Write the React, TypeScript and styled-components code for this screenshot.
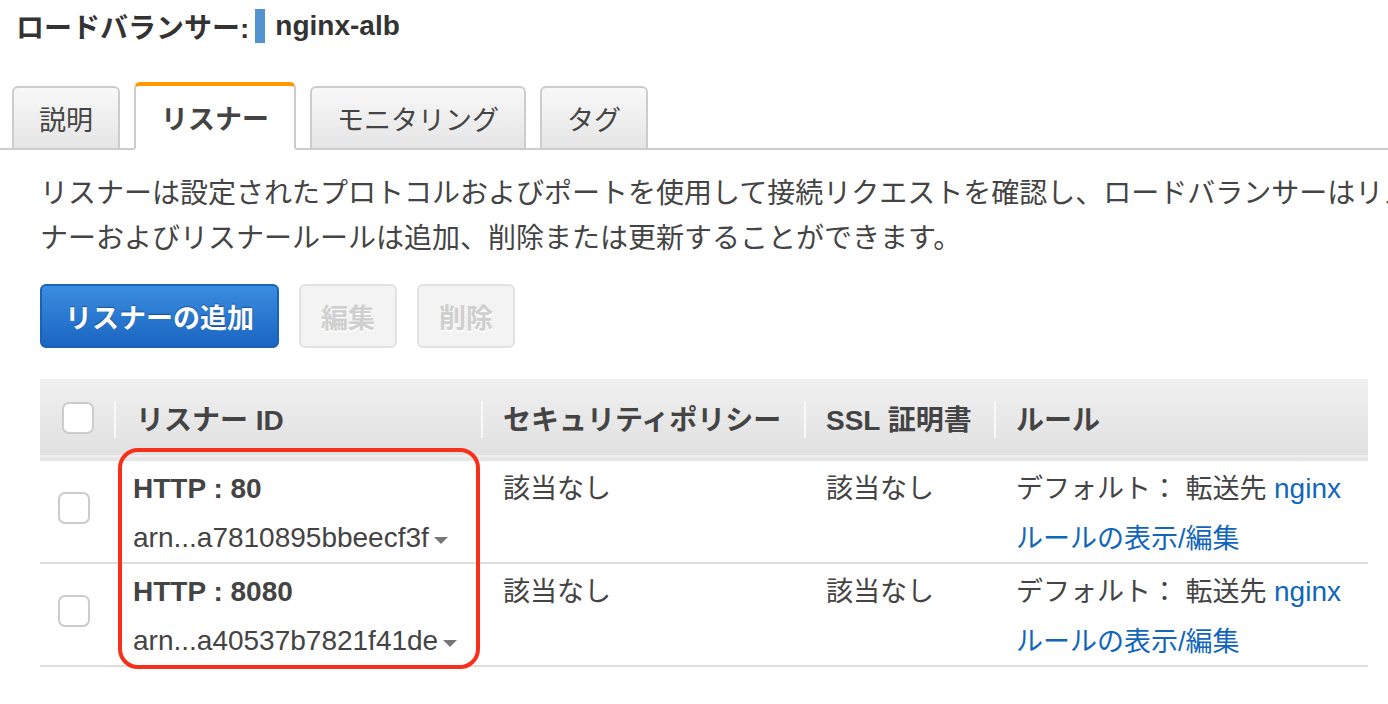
import styled, { createGlobalStyle } from "styled-components";

const GlobalStyle = createGlobalStyle`
	html, body {
		margin: 0;
		padding: 0;
		background: #ffffff;
		overflow: hidden;
	}
	body {
		width: 1388px;
		font-family: "Liberation Sans", "Noto Sans CJK JP", sans-serif;
		color: #444444;
	}
`

const Page = styled.div`
	width: 1388px;
	height: 704px;
	overflow: hidden;
`

const Title = styled.h1`
	margin: 0;
	padding: 0 16px;
	height: 52px;
	display: flex;
	align-items: center;
	font-size: 28px;
	font-weight: 700;
	color: #333333;
`

const TitleMark = styled.span`
	display: inline-block;
	width: 10px;
	height: 34px;
	background: #5294cf;
	margin: 0 10px 0 6px;
`

const TabBar = styled.div`
	margin-top: 30px;
	display: flex;
	align-items: flex-end;
	gap: 14px;
	padding-left: 12px;
	border-bottom: 2px solid #cccccc;
	height: 66px;
`

const Tab = styled.div<{ $active?: boolean }>`
	box-sizing: border-box;
	height: ${(p) => (p.$active ? "68px" : "64px")};
	margin-bottom: -2px;
	padding: 0 25px;
	display: flex;
	align-items: center;
	font-size: 27px;
	font-weight: ${(p) => (p.$active ? 700 : 400)};
	color: #444444;
	border: 2px solid #cccccc;
	border-top: ${(p) => (p.$active ? "4px solid #ff9900" : "2px solid #cccccc")};
	border-bottom: ${(p) => (p.$active ? "2px solid #ffffff" : "2px solid #cccccc")};
	border-radius: 6px 6px 0 0;
	background: ${(p) => (p.$active ? "#ffffff" : "linear-gradient(#f8f8f8, #e5e5e5)")};
`

const Content = styled.div`
	padding: 0 20px 0 40px;
`

const Description = styled.div`
	margin-top: 21px;
	font-size: 28px;
	line-height: 45px;
	color: #444444;
	white-space: nowrap;
`

const ButtonRow = styled.div`
	margin-top: 23px;
	display: flex;
	gap: 20px;
`

const Button = styled.button<{ $primary?: boolean }>`
	box-sizing: border-box;
	height: 64px;
	padding: 0 ${(p) => (p.$primary ? "23px" : "20px")};
	font-family: "Liberation Sans", "Noto Sans CJK JP", sans-serif;
	font-size: 27px;
	font-weight: 700;
	border-radius: 6px;
	cursor: pointer;
	color: ${(p) => (p.$primary ? "#ffffff" : "#cfcfcf")};
	background: ${(p) => (p.$primary ? "linear-gradient(#3a8de0, #1a65c1)" : "#f3f3f3")};
	border: 2px solid ${(p) => (p.$primary ? "#1862b9" : "#e2e2e2")};
	text-shadow: ${(p) => (p.$primary ? "0 -1px 1px rgba(0,0,0,0.35)" : "0 2px 0 #ffffff")};
`

const TableWrap = styled.div`
	position: relative;
	margin-top: 31px;
	width: 1328px;
`

const Table = styled.table`
	width: 1328px;
	border-collapse: collapse;
	table-layout: fixed;
`

const HeadRow = styled.tr`
	background: linear-gradient(#f0f0f0, #e1e1e1);
	border-bottom: 4px solid #e6e6e6;
`

const Th = styled.th<{ $w: number }>`
	position: relative;
	box-sizing: border-box;
	width: ${(p) => p.$w}px;
	height: 80px;
	padding: 0 0 0 22px;
	text-align: left;
	font-size: 28px;
	font-weight: 700;
	color: #444444;
	white-space: nowrap;
	&:not(:first-child)::before {
		content: "";
		position: absolute;
		left: 0;
		top: 22px;
		height: 37px;
		border-left: 2px solid #f8f8f8;
	}
`

const BodyRow = styled.tr`
	border-bottom: 2px solid #dddddd;
`

const Td = styled.td`
	box-sizing: border-box;
	vertical-align: top;
	padding: 3px 0 0 22px;
	font-size: 27px;
	color: #444444;
`

const CheckCell = styled.td`
	box-sizing: border-box;
	vertical-align: middle;
	padding: 0 0 0 20px;
`

const Checkbox = styled.span<{ $head?: boolean }>`
	display: block;
	box-sizing: border-box;
	width: 32px;
	height: 32px;
	margin-top: ${(p) => (p.$head ? "0" : "-8px")};
	margin-left: ${(p) => (p.$head ? "0" : "-2px")};
	border: 2px solid #cccccc;
	border-radius: 7px;
	background: #ffffff;
`

const Line = styled.div`
	height: 50px;
	line-height: 50px;
	white-space: nowrap;
	& + & {
		height: 48px;
	}
`

const ListenerName = styled(Line)`
	font-size: 28px;
	font-weight: 700;
	margin-left: -3px;
`

const Arn = styled(Line)`
	height: 48px;
	font-size: 28px;
	margin-left: -3px;
	display: flex;
	align-items: center;
`

const Caret = styled.span`
	display: inline-block;
	margin: 4px 0 0 5px;
	border-left: 7px solid transparent;
	border-right: 7px solid transparent;
	border-top: 7px solid #777777;
`

const Link = styled.a<{ $latin?: boolean }>`
	color: #1166bb;
	text-decoration: none;
	cursor: pointer;
	font-size: ${(p) => (p.$latin ? "28px" : "inherit")};
`

const Highlight = styled.div`
	position: absolute;
	left: 78px;
	top: 69px;
	width: 362px;
	height: 221px;
	box-sizing: border-box;
	border: 4px solid #f6301a;
	border-radius: 20px;
	pointer-events: none;
`

const listeners = [
	{ name: "HTTP : 80", arn: "arn...a7810895bbeecf3f" },
	{ name: "HTTP : 8080", arn: "arn...a40537b7821f41de" },
];

export default function App() {
	return (
		<Page>
			<GlobalStyle />
			<Title>
				ロードバランサー:<TitleMark />nginx-alb
			</Title>
			<TabBar>
				<Tab>説明</Tab>
				<Tab $active>リスナー</Tab>
				<Tab>モニタリング</Tab>
				<Tab>タグ</Tab>
			</TabBar>
			<Content>
				<Description>
					<div>リスナーは設定されたプロトコルおよびポートを使用して接続リクエストを確認し、ロードバランサーはリスナーで定義したルールに基づいてリクエストをルーティングします。リス</div>
					<div>ナーおよびリスナールールは追加、削除または更新することができます。</div>
				</Description>
				<ButtonRow>
					<Button $primary>リスナーの追加</Button>
					<Button disabled>編集</Button>
					<Button disabled>削除</Button>
				</ButtonRow>
				<TableWrap>
					<Table>
						<thead>
							<HeadRow>
								<Th $w={74}><Checkbox $head /></Th>
								<Th $w={367}>リスナー ID</Th>
								<Th $w={323}>セキュリティポリシー</Th>
								<Th $w={190}>SSL 証明書</Th>
								<Th $w={374}>ルール</Th>
							</HeadRow>
						</thead>
						<tbody>
							{listeners.map((l) => (
								<BodyRow key={l.name}>
									<CheckCell><Checkbox /></CheckCell>
									<Td>
										<ListenerName>{l.name}</ListenerName>
										<Arn>{l.arn}<Caret /></Arn>
									</Td>
									<Td><Line>該当なし</Line></Td>
									<Td><Line>該当なし</Line></Td>
									<Td>
										<Line>デフォルト： 転送先 <Link $latin>nginx</Link></Line>
										<Line><Link>ルールの表示/編集</Link></Line>
									</Td>
								</BodyRow>
							))}
						</tbody>
					</Table>
					<Highlight />
				</TableWrap>
			</Content>
		</Page>
	);
}
